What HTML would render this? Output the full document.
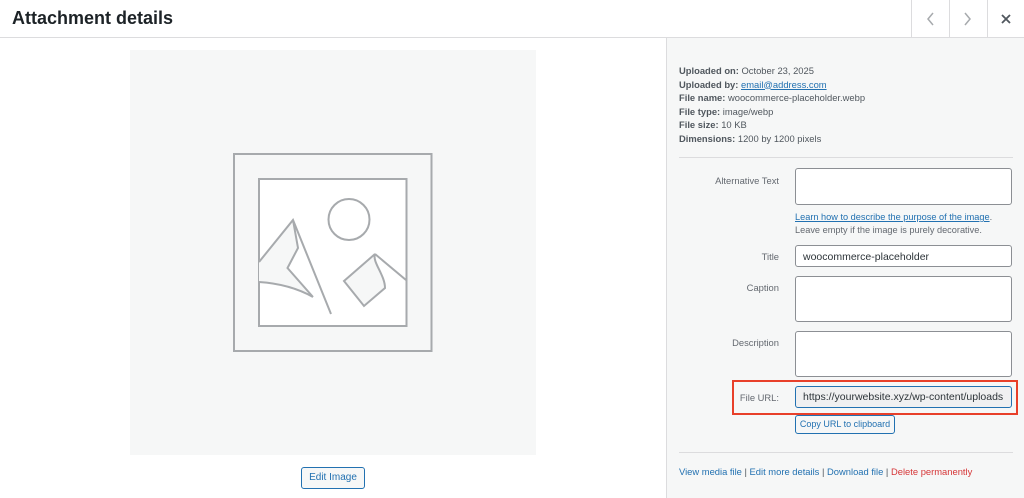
<!DOCTYPE html>
<html><head><style>
*{box-sizing:border-box;margin:0;padding:0}
body{width:1024px;height:498px;overflow:hidden;background:#fff;font-family:"Liberation Sans",sans-serif;position:relative;color:#50575e}
.a{position:absolute}
.hdr{left:0;top:0;width:1024px;height:38px;border-bottom:1px solid #dcdcde;background:#fff}
.title{left:12px;top:8px;font-size:18px;font-weight:bold;color:#1d2327}
.vd{top:0;width:1px;height:38px;background:#dcdcde}
.panel{left:666px;top:38px;width:358px;height:460px;background:#f6f7f7;border-left:1px solid #dcdcde}
.info{left:679px;font-size:9.4px;color:#50575e;line-height:13.5px}
.info b{color:#50575e}
.lbl{font-size:9.4px;color:#646970;text-align:right;width:120px;left:659px}
.ta{left:795px;width:217px;background:#fff;border:1px solid #8c8f94;border-radius:3px}
.lnk{color:#2271b1;text-decoration:underline}
.btn{border:1px solid #2271b1;color:#2271b1;background:#f6f7f7;border-radius:3px;font-size:9px;text-align:center}
.hr{left:679px;width:334px;height:1px;background:#dcdcde}
</style></head><body>
<div class="a hdr"></div>
<div class="a title">Attachment details</div>
<div class="a vd" style="left:911px"></div>
<div class="a vd" style="left:949px"></div>
<div class="a vd" style="left:987px"></div>
<svg class="a" style="left:911px;top:0" width="113" height="38"><path d="M933 13l-5 6 5 6" transform="translate(-911 0)" stroke="#a7aaad" stroke-width="1.5" fill="none"/><path d="M965 13l5 6-5 6" transform="translate(-911 0)" stroke="#a7aaad" stroke-width="1.5" fill="none"/><path d="M91 15l8 8M99 15l-8 8" stroke="#50575e" stroke-width="1.8"/></svg>

<div class="a" style="left:130px;top:50px;width:406px;height:405px;background:#f6f7f7"></div>
<svg class="a" style="left:0;top:0" width="666" height="498">
<rect x="234" y="154" width="197.5" height="197" fill="none" stroke="#a7aaad" stroke-width="2"/>
<rect x="259" y="179" width="147.5" height="147" fill="#fff" stroke="#a7aaad" stroke-width="2"/>
<circle cx="349" cy="219.5" r="20.5" fill="none" stroke="#a7aaad" stroke-width="2"/>
<path d="M259 262L293 220L298 248L287.5 268L313 297Q290 284 259 282Z" fill="#f6f7f7"/>
<path d="M259 262L293 220L331 314M293 220L298 248L287.5 268L313 297M259 282Q290 284 313 297" fill="none" stroke="#a7aaad" stroke-width="2"/>
<path d="M344 281L375 254C372 262 385 275 385 288L364 306Z" fill="#f6f7f7" stroke="#a7aaad" stroke-width="2"/>
<path d="M375 254L406 280" fill="none" stroke="#a7aaad" stroke-width="2"/>
</svg>
<div class="a btn" style="left:301px;top:467px;width:64px;height:22px;line-height:20px;font-size:10px">Edit Image</div>

<div class="a panel"></div>
<div class="a info" style="top:64px"><b>Uploaded on:</b> October 23, 2025<br><b>Uploaded by:</b> <span class="lnk">email@address.com</span><br><b>File name:</b> woocommerce-placeholder.webp<br><b>File type:</b> image/webp<br><b>File size:</b> 10 KB<br><b>Dimensions:</b> 1200 by 1200 pixels</div>
<div class="a hr" style="top:157px"></div>
<div class="a lbl" style="top:175px">Alternative Text</div>
<div class="a ta" style="top:168px;height:37px"></div>
<div class="a" style="left:795px;top:211px;font-size:9.2px;line-height:13px;color:#646970"><span class="lnk">Learn how to describe the purpose of the image</span>.<br>Leave empty if the image is purely decorative.</div>
<div class="a lbl" style="top:251px">Title</div>
<div class="a ta" style="top:245px;height:22px;font-size:10.5px;color:#2c3338;padding:5px 7px">woocommerce-placeholder</div>
<div class="a lbl" style="top:282px">Caption</div>
<div class="a ta" style="top:276px;height:46px"></div>
<div class="a lbl" style="top:337px">Description</div>
<div class="a ta" style="top:331px;height:46px"></div>
<div class="a" style="left:732px;top:380px;width:286px;height:35px;border:2px solid #e8402a"></div>
<div class="a lbl" style="top:392px">File URL:</div>
<div class="a ta" style="top:386px;height:22px;background:#f0f0f1;border:1.5px solid #2271b1;font-size:10.5px;color:#2c3338;padding:4px 7px;white-space:nowrap;overflow:hidden">https://yourwebsite.xyz/wp-content/uploads</div>
<div class="a btn" style="left:795px;top:415px;width:100px;height:19px;line-height:17px;font-size:9px">Copy URL to clipboard</div>
<div class="a hr" style="top:452px"></div>
<div class="a" style="left:679px;top:466px;font-size:9.4px;color:#50575e"><span style="color:#2271b1">View media file</span> | <span style="color:#2271b1">Edit more details</span> | <span style="color:#2271b1">Download file</span> | <span style="color:#d63638">Delete permanently</span></div>
</body></html>
